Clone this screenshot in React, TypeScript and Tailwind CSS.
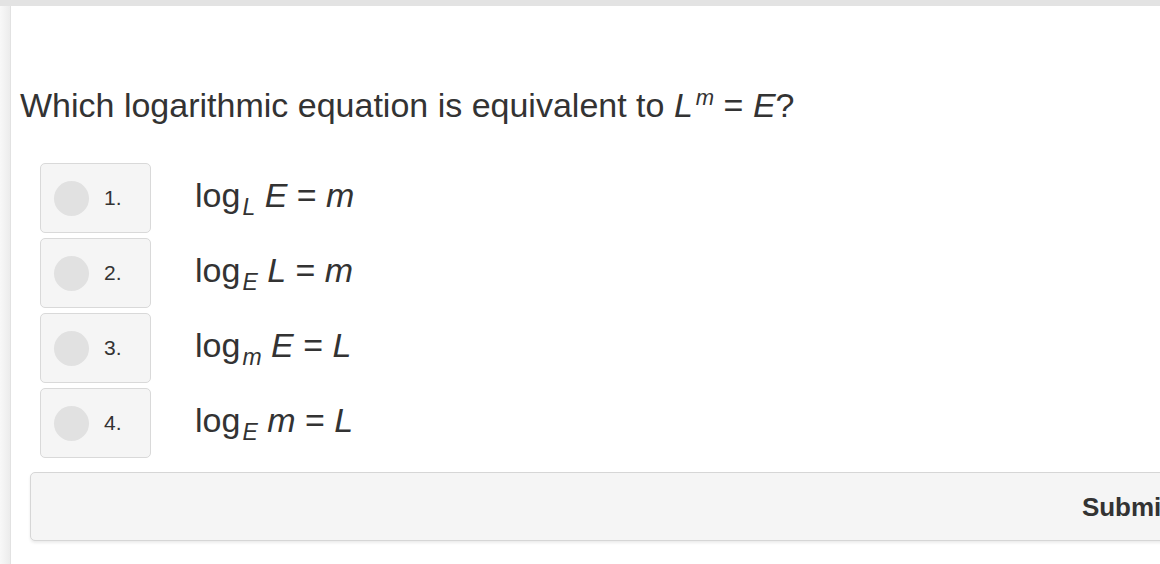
import React from "react";

const font = { fontFamily: '"Liberation Sans", Arial, Helvetica, sans-serif' };

type Opt = { n: string; base: string; sub: string; arg: string; rhs: string };

const options: Opt[] = [
  { n: "1.", base: "log", sub: "L", arg: "E", rhs: "m" },
  { n: "2.", base: "log", sub: "E", arg: "L", rhs: "m" },
  { n: "3.", base: "log", sub: "m", arg: "E", rhs: "L" },
  { n: "4.", base: "log", sub: "E", arg: "m", rhs: "L" },
];

function Option({ o }: { o: Opt }) {
  return (
    <div className="flex items-center">
      <div className="flex h-[70px] w-[111px] shrink-0 items-center rounded-[5px] border border-[#d9d9d9] bg-[#f5f5f5] pl-[13px]">
        <div className="h-[35px] w-[35px] rounded-full bg-[#e1e1e1]" />
        <span className="ml-[15px] mt-[-2px] text-[21px] leading-[21px] text-[#333]">{o.n}</span>
      </div>
      <div className="ml-[44px] mt-[-6px] whitespace-nowrap text-[34px] leading-[34px] text-[#333]">
        <span>{o.base}</span>
        <span className="relative top-[8px] ml-[2px] text-[23px] italic leading-[0]">{o.sub}</span>
        <span className="italic"> {o.arg}</span>
        <span> = </span>
        <span className="italic">{o.rhs}</span>
      </div>
    </div>
  );
}

export default function App() {
  return (
    <div className="h-[564px] w-[1160px] overflow-hidden bg-white" style={font}>
      <div className="h-[6px] bg-[#e3e3e3]" />
      <div className="flex h-[558px]">
        <div className="w-[10px] shrink-0 bg-gradient-to-r from-[#f8f8f8] to-[#ececec]" />
        <div className="min-w-0 flex-1 border-l border-[#e2e2e2] bg-white pt-[82px]">
          <div className="pl-[9px] whitespace-nowrap text-[34px] leading-[34px] text-[#333]">
            Which logarithmic equation is equivalent to{" "}
            <span className="italic">L</span>
            <span className="relative top-[-12px] ml-[3px] text-[22px] italic leading-[0]">m</span>
            <span> = </span>
            <span className="italic">E</span>?
          </div>
          <div className="mt-[41px] flex flex-col gap-[5px] pl-[29px]">
            {options.map((o) => (
              <Option key={o.n} o={o} />
            ))}
          </div>
          <div className="ml-[19px] mt-[14px] flex h-[69px] w-[1200px] items-center justify-end rounded-[5px] border border-[#d6d6d6] bg-[#f5f5f5] pr-[59px] shadow-[0_2px_3px_rgba(0,0,0,0.08)]">
            <span className="text-[26px] font-bold leading-[26px] text-[#333]">Submit</span>
          </div>
        </div>
      </div>
    </div>
  );
}
